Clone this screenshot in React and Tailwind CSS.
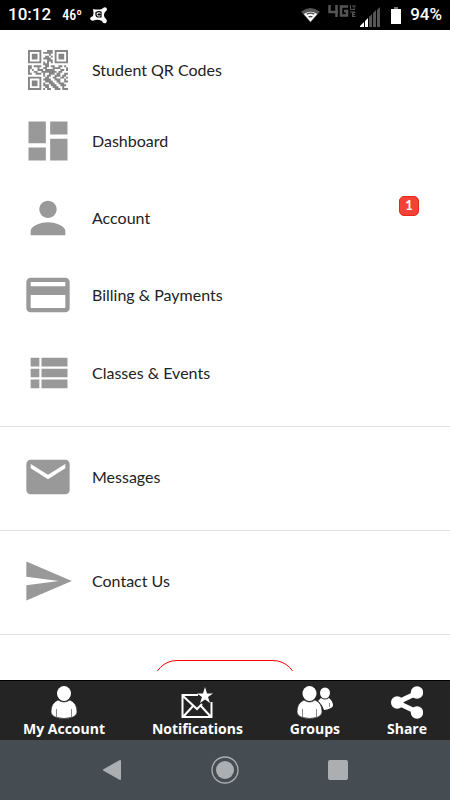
const QR = [
  "111111100011101111111",
  "100000101111101000001",
  "101110100001001011101",
  "101110100110101011101",
  "101110101111001011101",
  "100000100011101000001",
  "111111101010101111111",
  "000000001110000000000",
  "110111100110110011010",
  "110001001100011110001",
  "101001110111110001101",
  "100110011111111011000",
  "110011101001110110011",
  "000000001011001110110",
  "111111100110011001101",
  "100000101111001110010",
  "101110100111100110011",
  "101110101001110011100",
  "101110101110111001110",
  "100000100110011100100",
  "111111101011001110111",
];

const QR_PATH = QR.map((row, y) => [...row].map((c, x) => (c === "1" ? `M${x} ${y}h1v1h-1z` : "")).join("")).join("");

function QrIcon() {
  return (
    <svg width="40" height="40" viewBox="0 0 21 21" fill="#858585" aria-hidden="true">
      <path d={QR_PATH} />
    </svg>
  );
}

const PATHS = {
  dashboard: "M3 13h8V3H3v10zm0 8h8v-6H3v6zm10 0h8V11h-8v10zm0-18v6h8V3h-8z",
  person: "M12 12c2.21 0 4-1.79 4-4s-1.79-4-4-4-4 1.79-4 4 1.79 4 4 4zm0 2c-2.67 0-8 1.34-8 4v2h16v-2c0-2.66-5.33-4-8-4z",
  card: "M20 4H4c-1.11 0-1.99.89-1.99 2L2 18c0 1.11.89 2 2 2h16c1.11 0 2-.89 2-2V6c0-1.11-.89-2-2-2zm0 14H4v-6h16v6zm0-10H4V6h16v2z",
  list: "M4 14h4v-4H4v4zm0 5h4v-4H4v4zM4 9h4V5H4v4zm5 5h12v-4H9v4zm0 5h12v-4H9v4zM9 5v4h12V5H9z",
  mail: "M20 4H4c-1.1 0-1.99.9-1.99 2L2 18c0 1.1.9 2 2 2h16c1.1 0 2-.9 2-2V6c0-1.1-.9-2-2-2zm0 4l-8 5-8-5V6l8 5 8-5v2z",
  send: "M2.01 21L23 12 2.01 3 2 10l15 2-15 2z",
};

function MenuIcon({ name }) {
  return (
    <svg width="52" height="52" viewBox="0 0 24 24" fill="#999999" aria-hidden="true">
      <path d={PATHS[name]} />
    </svg>
  );
}

function MenuRow({ icon, label, badge, height = "h-[77px]" }) {
  return (
    <a href="#" className={"flex items-center pr-[31px] pl-[21px] " + height}>
      <span className="flex w-[53px] shrink-0 justify-center">{icon}</span>
      <span className="ml-[18px] flex-1">{label}</span>
      {badge && (
        <span className="mb-6 flex h-5 w-5 items-center justify-center rounded-[5px] border border-[#e8251b] bg-[#f44336] text-[13px] font-bold text-white">
          {badge}
        </span>
      )}
    </a>
  );
}

function StatusBar() {
  return (
    <header className="flex h-[30px] shrink-0 items-center bg-black px-2 font-[Roboto,sans-serif] text-[17px] font-medium text-white">
      <span>10:12</span>
      <span className="ml-[11px] font-['Roboto_Condensed',Roboto,sans-serif] text-sm">46º</span>
      <svg className="ml-2" width="18" height="18" viewBox="0 0 18 18" aria-hidden="true">
        <path d="M3 3 Q8 4 12 3 L13 2 Q16 0 17 3 Q17 5 15 6 Q13 9 15 12 Q18 14 16 17 Q13 18 12 15 Q8 13 5 14 Q2 16 0 13 Q0 11 3 10 Q4 7 3 3Z" fill="#fff" />
        <path d="M6 6.500Q8.500 5 11 6V11H7.500Q5.500 10 6 6.500Z" fill="none" stroke="#000" strokeWidth="1.200" />
        <path d="M7.500 8.500h3M9 7v3" stroke="#000" />
      </svg>
      <div className="ml-auto flex items-center">
        <svg width="19" height="16" viewBox="0 0 20 16" aria-hidden="true">
          <path d="M0 4.500Q10-3 20 4.500L10 16Z" fill="#555" />
          <path d="M3 7Q10 2 17 7L10 15Z" fill="#fff" />
          <path d="M6 7Q10 5 14 7M8 10Q10 9 12 10" fill="none" stroke="#444" strokeWidth="1.500" />
        </svg>
        <svg className="mb-2 ml-2" width="28" height="13" viewBox="0 0 28 13" fill="none" stroke="#555" strokeWidth="2.500" role="img" aria-label="4G LTE">
          <path d="M1.500 0V7H10M8.500 0V12M20 1.500H13V10.500H19V6H16" />
          <path d="M22.500 0V4.500H27M22 7H27M24.500 7V12M24 1H28M26 1V5M27.500 7.500H25V11.500H27.500M25 9.500H27" strokeWidth="1" />
        </svg>
        <svg className="mt-1 ml-1" width="20" height="20" viewBox="0 0 20 20" aria-hidden="true">
          <path d="M0 20V19L4 15V20ZM5 20V14L8 11V20Z" fill="#fff" />
          <path d="M9 20V10L12 7V20ZM13 20V6L16 3V20ZM17 20V3L20 0V20Z" fill="#555" />
        </svg>
        <svg className="ml-[11px]" width="10" height="17" viewBox="0 0 10 17" aria-hidden="true">
          <path d="M3 0h4v2h-4z" fill="#777" />
          <path d="M0 2h10v15H0z" fill="#fff" />
        </svg>
        <span className="ml-[9px]">94%</span>
      </div>
    </header>
  );
}

function AccountIcon() {
  return (
    <svg width="26" height="33" viewBox="0 0 26 33" fill="#fff" aria-hidden="true">
      <ellipse cx="13" cy="7.500" rx="7" ry="7.500" />
      <path d="M7 14Q13 18 19 14Q26 17 26 26Q26 29 22 31Q13 34 4 31Q0 29 0 26Q0 17 7 14Z" stroke="#242424" strokeWidth="0.600" />
      <path d="M5.500 23V31M20.500 23V31" stroke="#888" />
    </svg>
  );
}

function NotificationsIcon() {
  return (
    <svg width="32" height="33" viewBox="0 0 32 33" aria-hidden="true">
      <path d="M17 9H1.500V31H30.500V16M2 10L16 23L21 18M2 31L12 20M30 31L20 20" fill="none" stroke="#fff" strokeWidth="2" />
      <path d="M24 1L26 7.500H32L27 11L29 17L24 13.500L19 17L21 11L16 7.500H22Z" fill="#fff" />
    </svg>
  );
}

function GroupsIcon() {
  return (
    <svg width="36" height="33" viewBox="0 0 36 33" fill="#fff" aria-hidden="true">
      <ellipse cx="28" cy="7" rx="5" ry="5.500" />
      <path d="M24 12Q28 15 32 12Q36 15 36 20Q34 23 27 24Q25 18 21 15Z" />
      <path d="M32.500 17V21" stroke="#888" />
      <ellipse cx="12.500" cy="7.500" rx="8" ry="8.500" fill="#242424" />
      <ellipse cx="12.500" cy="7.500" rx="7" ry="7.500" />
      <path d="M7 14Q12.500 18 18 14Q25 17 25 26Q25 29 21 31Q12.500 34 4 31Q0 29 0 26Q0 17 7 14Z" stroke="#242424" strokeWidth="0.600" />
      <path d="M5.500 23V31M19.500 23V31" stroke="#888" />
    </svg>
  );
}

function ShareIcon() {
  return (
    <svg width="32" height="33" viewBox="0 0 32 33" fill="#fff" aria-hidden="true">
      <path d="M26 7L6 16.500L26 26" fill="none" stroke="#fff" strokeWidth="5" />
      <circle cx="26" cy="6.500" r="6.200" />
      <circle cx="6.200" cy="16.500" r="6.200" />
      <circle cx="26" cy="26.500" r="6.200" />
    </svg>
  );
}

function Tab({ icon, label }) {
  return (
    <button type="button" className="flex flex-col items-center pt-[5px]">
      {icon}
      <span className="text-sm leading-5">{label}</span>
    </button>
  );
}

export default function App() {
  return (
    <div className="flex h-screen flex-col bg-white">
      <StatusBar />
      <main className="min-h-0 flex-1 overflow-hidden pb-[9px] font-[Lato,sans-serif] text-base text-[#222]">
        <div className="flex h-full flex-col overflow-hidden">
          <nav className="shrink-0">
            <div className="border-b border-[#e0e4e6] pt-[7px] pb-[15px]">
              <MenuRow icon={<QrIcon />} label="Student QR Codes" height="h-[65px]" />
              <MenuRow icon={<MenuIcon name="dashboard" />} label="Dashboard" />
              <MenuRow icon={<MenuIcon name="person" />} label="Account" badge="1" />
              <MenuRow icon={<MenuIcon name="card" />} label="Billing & Payments" height="h-[78px]" />
              <MenuRow icon={<MenuIcon name="list" />} label="Classes & Events" />
            </div>
            <div className="border-b border-[#e0e4e6] pt-[11px] pb-[15px]">
              <MenuRow icon={<MenuIcon name="mail" />} label="Messages" />
            </div>
            <div className="border-b border-[#e0e4e6] pt-[11px] pb-[15px]">
              <MenuRow icon={<MenuIcon name="send" />} label="Contact Us" />
            </div>
          </nav>
          <button type="button" aria-label="Log out" className="mt-[25px] h-12 w-36 shrink-0 self-center rounded-full border border-[#f00]" />
        </div>
      </main>
      <nav className="flex h-[60px] shrink-0 justify-between border-t border-black bg-[#242424] px-[23px] font-['Open_Sans',sans-serif] font-bold text-white">
        <Tab icon={<AccountIcon />} label="My Account" />
        <Tab icon={<NotificationsIcon />} label="Notifications" />
        <Tab icon={<GroupsIcon />} label="Groups" />
        <Tab icon={<ShareIcon />} label="Share" />
      </nav>
      <footer className="flex h-[60px] shrink-0 items-center justify-center gap-[89px] bg-[#454d52]">
        <button type="button" aria-label="Back">
          <svg width="20" height="20" viewBox="0 0 20 20" fill="#abafb2" stroke="#abafb2" strokeWidth="2" strokeLinejoin="round">
            <path d="M2 10L18 1V19Z" />
          </svg>
        </button>
        <button type="button" aria-label="Home">
          <svg width="28" height="28" viewBox="0 0 28 28">
            <circle cx="14" cy="14" r="13" fill="none" stroke="#abafb2" strokeWidth="1.300" />
            <circle cx="14" cy="14" r="9" fill="#abafb2" />
          </svg>
        </button>
        <button type="button" aria-label="Recent apps" className="h-5 w-5 rounded-[2px] bg-[#abafb2]" />
      </footer>
    </div>
  );
}
